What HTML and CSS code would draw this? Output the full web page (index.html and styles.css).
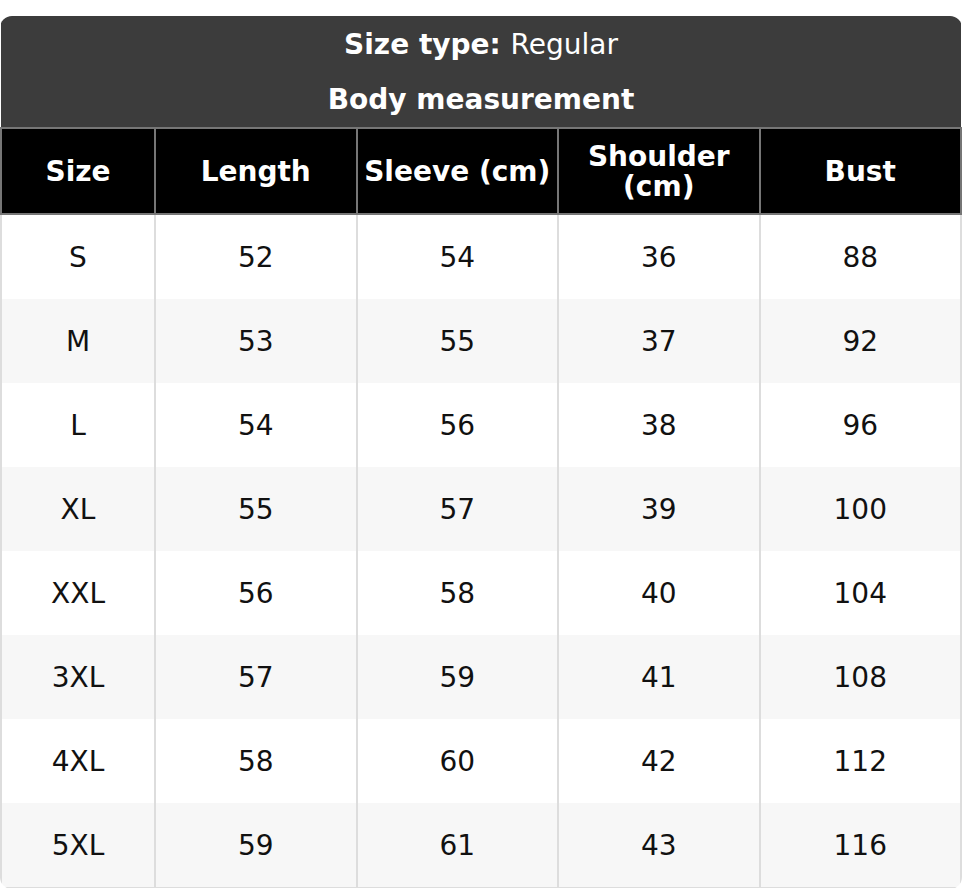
FILE: index.html
```html
<!DOCTYPE html>
<html lang="en">
<head>
<meta charset="utf-8">
<title>Size chart</title>
<link rel="stylesheet" href="styles.css">
</head>
<body>
<div class="chart">
  <table class="size-table">
    <colgroup>
      <col class="c-size">
      <col class="c-data">
      <col class="c-data">
      <col class="c-data">
      <col class="c-data">
    </colgroup>
    <thead>
      <tr class="title-row">
        <th colspan="5"><strong>Size type:</strong> <span class="light">Regular</span></th>
      </tr>
      <tr class="title-row title-row-2">
        <th colspan="5">Body measurement</th>
      </tr>
      <tr class="head-row">
        <th>Size</th>
        <th>Length</th>
        <th>Sleeve (cm)</th>
        <th>Shoulder (cm)</th>
        <th>Bust</th>
      </tr>
    </thead>
    <tbody>
      <tr><td>S</td><td>52</td><td>54</td><td>36</td><td>88</td></tr>
      <tr><td>M</td><td>53</td><td>55</td><td>37</td><td>92</td></tr>
      <tr><td>L</td><td>54</td><td>56</td><td>38</td><td>96</td></tr>
      <tr><td>XL</td><td>55</td><td>57</td><td>39</td><td>100</td></tr>
      <tr><td>XXL</td><td>56</td><td>58</td><td>40</td><td>104</td></tr>
      <tr><td>3XL</td><td>57</td><td>59</td><td>41</td><td>108</td></tr>
      <tr><td>4XL</td><td>58</td><td>60</td><td>42</td><td>112</td></tr>
      <tr><td>5XL</td><td>59</td><td>61</td><td>43</td><td>116</td></tr>
    </tbody>
  </table>
</div>
</body>
</html>
```
FILE: styles.css
```css
html, body {
  margin: 0;
  padding: 0;
  background: #ffffff;
}

body {
  padding-top: 16px;
  font-family: "DejaVu Sans", "Liberation Sans", sans-serif;
  font-size: 28px;
  color: #111111;
}

.chart {
  width: 962px;
  border-radius: 12px;
  overflow: hidden;
}

.size-table {
  width: 100%;
  border-collapse: collapse;
  table-layout: fixed;
}

.c-size {
  width: 154px;
}

.title-row th {
  background: #3c3c3c;
  color: #ffffff;
  font-weight: bold;
  height: 56px;
  padding: 0;
  border: none;
  text-align: center;
  vertical-align: middle;
}

.title-row-2 th {
  height: 55px;
}

.title-row .light {
  font-weight: normal;
}

.head-row th {
  background: #000000;
  color: #ffffff;
  font-weight: bold;
  height: 82px;
  padding: 2px 4px 0;
  border: 2px solid #767676;
  line-height: 30px;
  text-align: center;
  vertical-align: middle;
}

tbody td {
  height: 84px;
  padding: 0 4px;
  border: 2px solid #dddddd;
  border-top: none;
  border-bottom: none;
  text-align: center;
  vertical-align: middle;
  color: #111111;
}

tbody tr:nth-child(even) td {
  background: #f7f7f7;
}

tbody tr:last-child td {
  border-bottom: 2px solid #dddddd;
}
```
